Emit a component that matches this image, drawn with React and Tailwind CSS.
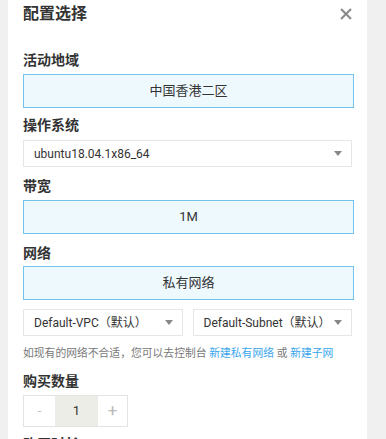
const font = "font-['Roboto','Noto_Sans_CJK_SC',sans-serif]";

const Label = ({ children, className = "" }) => (
    <div className={`text-[14px] leading-[20px] font-bold text-[#333] ${className}`}>{children}</div>
);

const Picked = ({ children, className = "" }) => (
    <div className={`h-[34px] w-full border border-[#74c3ec] bg-[#eef9fe] flex items-center justify-center text-[13px] text-[#333] ${className}`}>
        {children}
    </div>
);

const Select = ({ children, className = "" }) => (
    <div className={`h-[27px] border border-[#e6e6e6] bg-white flex items-center justify-between pl-[10px] pr-[9px] text-[12px] text-[#333] ${className}`}>
        <span>{children}</span>
        <span className="w-0 h-0 border-l-[4px] border-r-[4px] border-t-[5px] border-l-transparent border-r-transparent border-t-[#888]"></span>
    </div>
);

export default function App() {
    return (
        <div className={`h-[439px] w-[386px] overflow-hidden bg-[#f0f0f0] ${font}`}>
            <div className="ml-[8px] w-[359px] h-full bg-white pl-[15px] pr-[13px]">
                {/* header */}
                <div className="h-[28px] flex items-center justify-between">
                    <h1 className="text-[16px] font-bold text-[#333]">配置选择</h1>
                    <svg width="12" height="12" viewBox="0 0 12 12" className="mr-[2px] mt-[-1px]">
                        <path d="M1 1L11 11M11 1L1 11" stroke="#888" strokeWidth="2" />
                    </svg>
                </div>

                <Label className="mt-[22px]">活动地域</Label>
                <Picked className="mt-[4px]">中国香港二区</Picked>

                <Label className="mt-[7px]">操作系统</Label>
                <Select className="mt-[5px] w-[329px]">ubuntu18.04.1x86_64</Select>

                <Label className="mt-[9px]">带宽</Label>
                <Picked className="mt-[4px]">1M</Picked>

                <Label className="mt-[9px]">网络</Label>
                <Picked className="mt-[3px]">私有网络</Picked>

                <div className="mt-[9px] flex gap-[10px] w-[329px]">
                    <Select className="flex-1">Default-VPC（默认）</Select>
                    <Select className="flex-1">Default-Subnet（默认）</Select>
                </div>

                <p className="mt-[10px] text-[10.8px] leading-[16px] text-[#777] whitespace-nowrap">
                    如现有的网络不合适，您可以去控制台 <span className="text-[#3aa6ec]">新建私有网络</span> 或 <span className="text-[#3aa6ec]">新建子网</span>
                </p>

                <Label className="mt-[9px]">购买数量</Label>
                <div className="mt-[4px] flex h-[32px] w-[105px] border border-[#e3e3e3] text-[13px]">
                    <div className="w-[31px] flex items-center justify-center text-[#bbb]">-</div>
                    <div className="w-[43px] flex items-center justify-center bg-[#ecede6] text-[#333]">1</div>
                    <div className="flex-1 flex items-center justify-center text-[#bbb] text-[17px]">+</div>
                </div>

                <Label className="mt-[7px]">购买时长</Label>
            </div>
        </div>
    );
}
